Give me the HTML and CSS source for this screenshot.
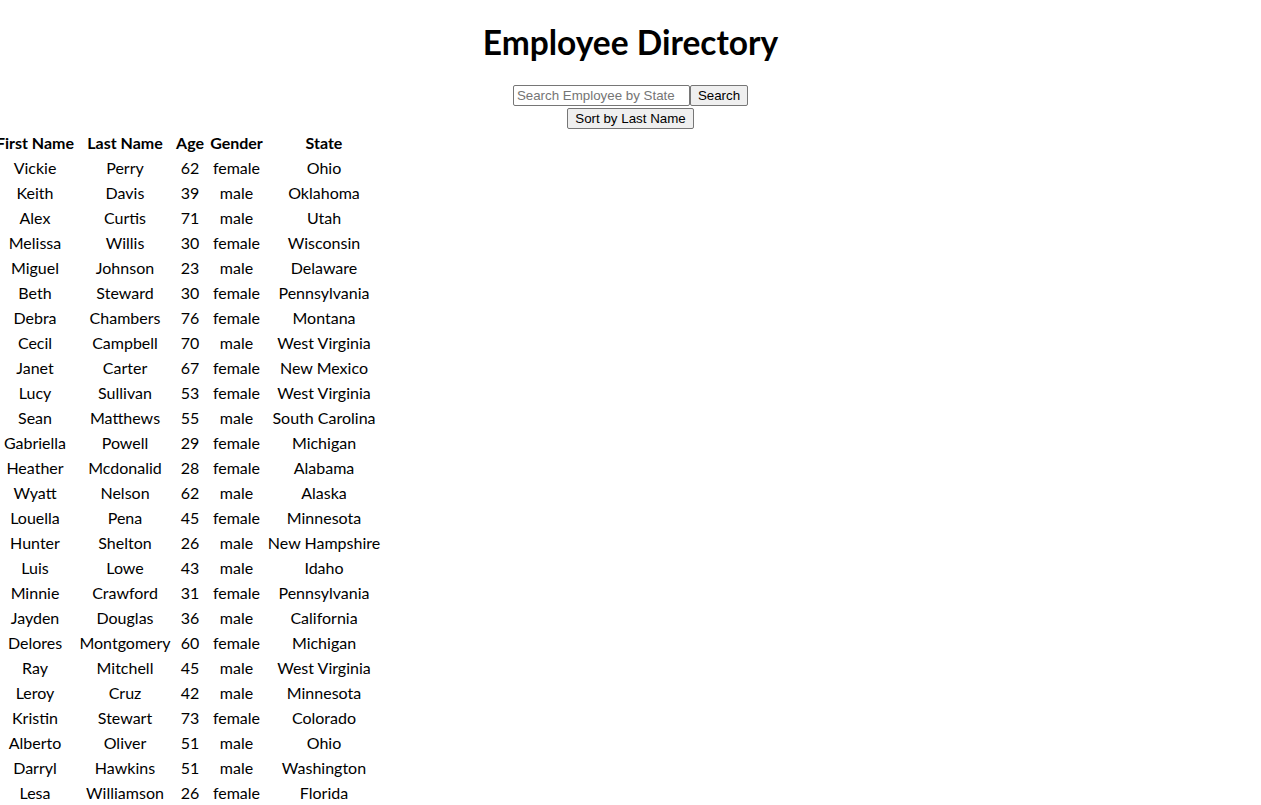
FILE: index.html
```html
<!DOCTYPE html>
<html>
<head>
<meta charset="utf-8">
<title>Employee Directory</title>
<link rel="stylesheet" href="styles.css">
</head>
<body>
<h1 class="title">Employee Directory</h1>
<div class="controls">
  <div class="search-row">
    <input class="search-input" type="text" placeholder="Search Employee by State"><button class="btn">Search</button>
  </div>
  <div class="sort-row">
    <button class="btn">Sort by Last Name</button>
  </div>
</div>
<table class="directory">
  <colgroup>
    <col class="c-first"><col class="c-last"><col class="c-age"><col class="c-gender"><col class="c-state">
  </colgroup>
  <thead>
    <tr><th>First Name</th><th>Last Name</th><th>Age</th><th>Gender</th><th>State</th></tr>
  </thead>
  <tbody>
    <tr><td>Vickie</td><td>Perry</td><td>62</td><td>female</td><td>Ohio</td></tr>
    <tr><td>Keith</td><td>Davis</td><td>39</td><td>male</td><td>Oklahoma</td></tr>
    <tr><td>Alex</td><td>Curtis</td><td>71</td><td>male</td><td>Utah</td></tr>
    <tr><td>Melissa</td><td>Willis</td><td>30</td><td>female</td><td>Wisconsin</td></tr>
    <tr><td>Miguel</td><td>Johnson</td><td>23</td><td>male</td><td>Delaware</td></tr>
    <tr><td>Beth</td><td>Steward</td><td>30</td><td>female</td><td>Pennsylvania</td></tr>
    <tr><td>Debra</td><td>Chambers</td><td>76</td><td>female</td><td>Montana</td></tr>
    <tr><td>Cecil</td><td>Campbell</td><td>70</td><td>male</td><td>West Virginia</td></tr>
    <tr><td>Janet</td><td>Carter</td><td>67</td><td>female</td><td>New Mexico</td></tr>
    <tr><td>Lucy</td><td>Sullivan</td><td>53</td><td>female</td><td>West Virginia</td></tr>
    <tr><td>Sean</td><td>Matthews</td><td>55</td><td>male</td><td>South Carolina</td></tr>
    <tr><td>Gabriella</td><td>Powell</td><td>29</td><td>female</td><td>Michigan</td></tr>
    <tr><td>Heather</td><td>Mcdonalid</td><td>28</td><td>female</td><td>Alabama</td></tr>
    <tr><td>Wyatt</td><td>Nelson</td><td>62</td><td>male</td><td>Alaska</td></tr>
    <tr><td>Louella</td><td>Pena</td><td>45</td><td>female</td><td>Minnesota</td></tr>
    <tr><td>Hunter</td><td>Shelton</td><td>26</td><td>male</td><td>New Hampshire</td></tr>
    <tr><td>Luis</td><td>Lowe</td><td>43</td><td>male</td><td>Idaho</td></tr>
    <tr><td>Minnie</td><td>Crawford</td><td>31</td><td>female</td><td>Pennsylvania</td></tr>
    <tr><td>Jayden</td><td>Douglas</td><td>36</td><td>male</td><td>California</td></tr>
    <tr><td>Delores</td><td>Montgomery</td><td>60</td><td>female</td><td>Michigan</td></tr>
    <tr><td>Ray</td><td>Mitchell</td><td>45</td><td>male</td><td>West Virginia</td></tr>
    <tr><td>Leroy</td><td>Cruz</td><td>42</td><td>male</td><td>Minnesota</td></tr>
    <tr><td>Kristin</td><td>Stewart</td><td>73</td><td>female</td><td>Colorado</td></tr>
    <tr><td>Alberto</td><td>Oliver</td><td>51</td><td>male</td><td>Ohio</td></tr>
    <tr><td>Darryl</td><td>Hawkins</td><td>51</td><td>male</td><td>Washington</td></tr>
    <tr><td>Lesa</td><td>Williamson</td><td>26</td><td>female</td><td>Florida</td></tr>
  </tbody>
</table>
</body>
</html>
```

FILE: styles.css
```css
html, body {
  background: #ffffff;
  color: #000000;
}
body {
  margin: 0;
  padding: 0 8px;
  font-family: Lato, "Open Sans", sans-serif;
  font-size: 16px;
}
.title {
  margin: 0;
  padding: 21px 0 21px;
  height: 43px;
  line-height: 43px;
  text-align: center;
  font-size: 33.5px;
  font-weight: 700;
}
.controls {
  text-align: center;
}
.search-row {
  display: flex;
  justify-content: center;
  height: 21px;
}
.sort-row {
  display: flex;
  justify-content: center;
  margin-top: 2px;
  height: 21px;
}
.search-input {
  box-sizing: border-box;
  width: 177px;
  height: 21px;
  margin: 0;
  padding: 1px 3px;
  border: 1px solid #767676;
  border-radius: 2px;
  font-family: "Liberation Sans", Arial, sans-serif;
  font-size: 13.33px;
  color: #000;
}
.search-input::placeholder {
  color: #757575;
}
.btn {
  box-sizing: border-box;
  height: 21px;
  margin: 0;
  padding: 1px 7px;
  border: 1px solid #767676;
  border-radius: 2px;
  background: #efefef;
  font-family: "Liberation Sans", Arial, sans-serif;
  font-size: 13.33px;
  color: #000;
}
.directory {
  margin: 0 0 0 -16px;
  border-collapse: separate;
  border-spacing: 2px;
  table-layout: fixed;
  width: 391px;
}
.c-first { width: 82px; }
.c-last { width: 94px; }
.c-age { width: 32px; }
.c-gender { width: 57px; }
.c-state { width: 114px; }
.directory th,
.directory td {
  padding: 1px 0;
  line-height: 21px;
  text-align: center;
  white-space: nowrap;
  overflow: visible;
}
.directory th {
  font-weight: 700;
}
```
